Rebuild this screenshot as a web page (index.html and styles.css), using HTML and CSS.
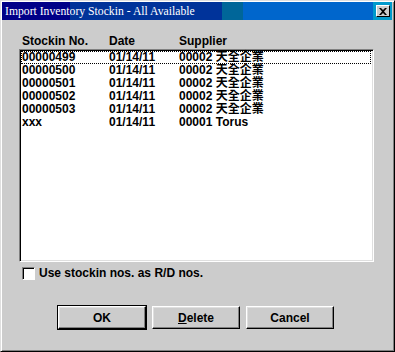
FILE: index.html
```html
<!DOCTYPE html>
<html lang="en">
<head>
<meta charset="UTF-8">
<title>Import Inventory Stockin - All Available</title>
<link rel="stylesheet" href="styles.css">
</head>
<body>

<div class="window">
    <div class="titlebar">
        <span class="title">Import Inventory Stockin - All Available</span>
        <div class="close-wrap">
            <div class="close-btn">
                <svg width="8" height="7" viewBox="0 0 8 7"><path d="M0 0h2l2 2 2-2h2L5 3.5 8 7H6L4 5 2 7H0l3-3.5z" fill="#000"/></svg>
            </div>
        </div>
    </div>

    <div class="content">
        <div class="cols head">
            <span>Stockin No.</span>
            <span>Date</span>
            <span>Supplier</span>
        </div>

        <div class="listbox">
            <div class="cols row focus"><span>00000499</span><span>01/14/11</span><span>00002 天全企業</span></div>
            <div class="cols row"><span>00000500</span><span>01/14/11</span><span>00002 天全企業</span></div>
            <div class="cols row"><span>00000501</span><span>01/14/11</span><span>00002 天全企業</span></div>
            <div class="cols row"><span>00000502</span><span>01/14/11</span><span>00002 天全企業</span></div>
            <div class="cols row"><span>00000503</span><span>01/14/11</span><span>00002 天全企業</span></div>
            <div class="cols row"><span>xxx</span><span>01/14/11</span><span>00001 Torus</span></div>
        </div>

        <label class="check">
            <span class="box"></span>
            <span>Use stockin nos. as R/D nos.</span>
        </label>

        <div class="buttons">
            <div class="btn default"><span>OK</span></div>
            <div class="btn"><span><u>D</u>elete</span></div>
            <div class="btn"><span>Cancel</span></div>
        </div>
    </div>
</div>

</body>
</html>
```

FILE: styles.css
```css
body {
    margin: 0;
    background: #cccccc;
    font-family: 'Liberation Sans', Arial, 'Noto Sans CJK TC', sans-serif;
    font-size: 12px;
    font-weight: bold;
    color: #000;
}
.window {
    width: 395px;
    height: 352px;
    box-sizing: border-box;
    background: #cccccc;
    border: 1px solid;
    border-color: #dfdfdf #000 #000 #dfdfdf;
    box-shadow: inset 1px 1px #fff, inset -1px -1px #808080;
    padding: 1px 2px 2px 1px;
}
.titlebar {
    height: 18px;
    display: flex;
    align-items: center;
    justify-content: space-between;
    background: linear-gradient(to right, #000088 0 68px, #00339a 68px 220px, #006699 220px 241px, #0066cc 241px);
}
.title {
    color: #fff;
    font-family: 'Liberation Serif', 'Times New Roman', serif;
    font-weight: normal;
    font-size: 11.7px;
    padding-left: 3px;
    padding-top: 1px;
}
.close-wrap {
    background: #0099cc;
    height: 18px;
    width: 19px;
    display: flex;
    align-items: center;
    justify-content: center;
}
.close-btn {
    width: 14px;
    height: 12px;
    box-sizing: border-box;
    background: #cccccc;
    border: 1px solid;
    border-color: #fff #000 #000 #fff;
    display: flex;
    align-items: center;
    justify-content: center;
}
.content {
    padding: 15px 18px 0 17px;
}
.cols {
    display: grid;
    grid-template-columns: 87px 70px 1fr;
    line-height: 13px;
    padding-left: 3px;
}
.head {
    height: 14px;
}
.listbox {
    height: 213px;
    box-sizing: border-box;
    background: #fff;
    border: 1px solid;
    border-color: #808080 #fff #fff #808080;
    box-shadow: inset 1px 1px #000, inset -1px -1px #dfdfdf;
    padding: 1px 2px 1px 1px;
}
.row {
    height: 13px;
    padding-left: 0;
    box-sizing: border-box;
    border: 1px dotted transparent;
    line-height: 11px;
}
.row.focus {
    border-color: #000;
}
.check {
    display: flex;
    align-items: center;
    gap: 4px;
    margin-top: 4px;
    padding-left: 3px;
    height: 14px;
}
.box {
    width: 13px;
    height: 13px;
    box-sizing: border-box;
    background: #fff;
    border: 1px solid;
    border-color: #808080 #fff #fff #808080;
    box-shadow: inset 1px 1px #000;
}
.buttons {
    display: flex;
    gap: 6px;
    margin-top: 26px;
    padding-left: 39px;
}
.btn {
    width: 88px;
    height: 23px;
    box-sizing: border-box;
    background: #cccccc;
    border: 1px solid;
    border-color: #fff #000 #000 #fff;
    box-shadow: inset -1px -1px #808080, inset 1px 1px #dfdfdf;
    display: flex;
    align-items: center;
    justify-content: center;
}
.btn.default {
    outline: 1px solid #000;
}
```
